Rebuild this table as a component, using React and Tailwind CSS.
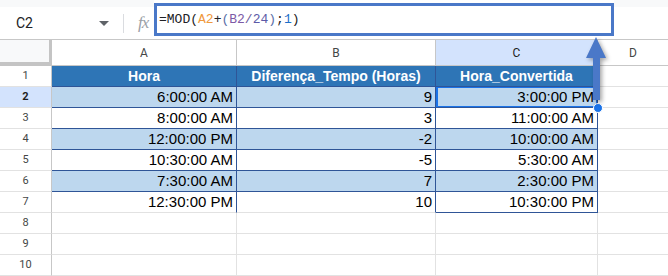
import React from 'react';

const cols = ['A', 'B', 'C', 'D'];
const colWidths = ['w-[185px]', 'w-[199px]', 'w-[162px]', 'w-[70px]'];

const data = [
  ['6:00:00 AM', '9', '3:00:00 PM'],
  ['8:00:00 AM', '3', '11:00:00 AM'],
  ['12:00:00 PM', '-2', '10:00:00 AM'],
  ['10:30:00 AM', '-5', '5:30:00 AM'],
  ['7:30:00 AM', '7', '2:30:00 PM'],
  ['12:30:00 PM', '10', '10:30:00 PM'],
];

const headers = ['Hora', 'Diferença_Tempo (Horas)', 'Hora_Convertida'];

const FormulaBar = () => (
  <div className="flex h-[40px] border-b border-[#c7c7c7]">
    <div className="w-[154px] flex flex-col">
      <div className="h-[7px] bg-[#f8f9fa]" />
      <div className="flex-1 flex items-center">
        <span className="ml-[16px] text-[14px] text-[#202124] font-['Roboto',sans-serif]">C2</span>
        <span className="ml-[66px] w-0 h-0 border-l-[5px] border-r-[5px] border-t-[5px] border-l-transparent border-r-transparent border-t-[#5f6368]" />
        <span className="ml-[14px] w-px h-[19px] bg-[#dadce0]" />
        <span className="ml-[14px] text-[17px] italic text-[#9aa0a6] font-['Liberation_Serif',serif] tracking-[-1px]">fx</span>
      </div>
    </div>
    <div className="w-[460px] h-[33px] mt-[3px] border-[3px] border-[#4a78c8] flex items-center pl-[2px] font-['Liberation_Mono',monospace] text-[13px] text-[#202124]">
      <span>=MOD(</span>
      <span className="text-[#f0993c]">A2</span>
      <span>+</span>
      <span className="text-[#5b6fa8]">(</span>
      <span className="text-[#7d5aa6]">B2</span>
      <span className="text-[#6a5a9a]">/</span>
      <span className="text-[#5c5aa8]">24</span>
      <span className="text-[#5b6fa8]">)</span>
      <span>;</span>
      <span className="text-[#1a6fc9]">1</span>
      <span>)</span>
    </div>
    <div className="flex-1">
      <div className="h-[7px] bg-[#f8f9fa]" />
    </div>
  </div>
);

const ColumnHeader = () => (
  <div className="flex h-[26px]">
    <div className="w-[52px] bg-[#f8f9fa] border-r-[3px] border-b-[4px] border-[#c4c4c4]" />
    {cols.map((c, i) => (
      <div
        key={c}
        className={`${colWidths[i]} flex items-center justify-center border-b border-[#c7c7c7] text-[12px] font-['Roboto',sans-serif] ${
          c === 'C' ? 'bg-[#d3e3fd] text-[#0b57d0]' : 'bg-white text-[#444746]'
        } ${i < 3 ? 'border-r border-r-[#c7c7c7]' : ''}`}
      >
        <span className={c === 'C' ? 'text-[#1f1f1f]' : ''}>{c}</span>
      </div>
    ))}
  </div>
);

const cellClass = (r, ci) => {
  let bg = 'bg-white';
  if (r === 1) bg = 'bg-[#2e75b6]';
  else if (r <= 7 && r % 2 === 0) bg = 'bg-[#bdd7ee]';

  let bottom = 'border-b border-b-[#e2e2e2]';
  if (r <= 6) bottom = 'border-b border-b-[#2f5597]';
  if (r === 7 && ci === 2) bottom = 'border-b border-b-[#2f5597]';

  let right = 'border-r border-r-[#e2e2e2]';
  if (r <= 7) right = 'border-r border-r-[#2f5597]';

  return `${bg} ${bottom} ${right}`;
};

const Row = ({ r }) => {
  const values = r === 1 ? headers : r <= 7 ? data[r - 2] : ['', '', ''];
  return (
    <div className="flex h-[21px]">
      <div
        className={`w-[52px] flex items-center justify-center border-r border-r-[#c7c7c7] border-b border-b-[#e2e2e2] text-[11px] font-['Roboto',sans-serif] ${
          r === 2 ? 'bg-[#d3e3fd] font-bold text-[#1f1f1f]' : 'bg-white text-[#444746]'
        }`}
      >
        {r}
      </div>
      {[0, 1, 2].map((ci) => (
        <div
          key={ci}
          className={`${colWidths[ci]} relative flex items-center overflow-hidden whitespace-nowrap ${cellClass(r, ci)} ${
            r === 1
              ? "justify-center text-white font-bold text-[14px] font-['Liberation_Sans',sans-serif]"
              : "justify-end pr-[3px] text-black text-[15px] font-['Liberation_Sans',sans-serif]"
          }`}
        >
          {values[ci]}
          {r === 2 && ci === 2 && (
            <div className="absolute -top-px left-0 right-[-1px] bottom-[-1px] border-2 border-[#1a73e8]" />
          )}
        </div>
      ))}
      <div className="w-[70px] bg-white border-b border-b-[#e2e2e2]" />
    </div>
  );
};

export default function App() {
  return (
    <div className="relative w-[668px] h-[276px] overflow-hidden bg-white">
      <FormulaBar />
      <ColumnHeader />
      {[1, 2, 3, 4, 5, 6, 7, 8, 9, 10].map((r) => (
        <Row key={r} r={r} />
      ))}

      {/* fill handle */}
      <div className="absolute left-[593px] top-[103px] w-[10px] h-[10px] rounded-full bg-[#1a73e8] border border-white" />

      {/* arrow pointing to the formula */}
      <svg
        className="absolute left-[580px] top-[34px] drop-shadow-[2px_2px_2px_rgba(0,0,0,0.35)]"
        width="32"
        height="72"
        viewBox="0 0 32 72"
      >
        <path d="M16 3 L26 24 L20 24 L20 66 L13 66 L13 24 L6 24 Z" fill="#4a78c8" />
      </svg>
    </div>
  );
}
